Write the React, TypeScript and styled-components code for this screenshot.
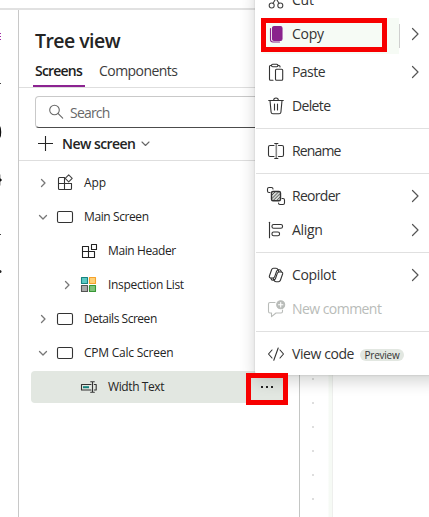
import React from 'react';
import styled, { createGlobalStyle, css } from 'styled-components';

const GlobalStyle = createGlobalStyle`
  * { box-sizing: border-box; }
  body { margin: 0; background: #fff; overflow: hidden; }
`;

const Page = styled.div`
  position: relative;
  width: 429px;
  height: 517px;
  overflow: hidden;
  display: flex;
  flex-direction: column;
  background: #fff;
  color: #242424;
  font-family: 'Open Sans', 'Noto Sans', sans-serif;
`;

const TopBar = styled.header`
  flex: none;
  height: 10px;
  border-bottom: 2px solid #e1e1e1;
`;

const Body = styled.div`
  flex: 1;
  display: flex;
  min-height: 0;
`;

const Rail = styled.nav`
  width: 19px;
  flex: none;
  border-right: 1px solid #c8c8c8;
`;

const TreePanel = styled.section`
  width: 281px;
  flex: none;
  display: flex;
  flex-direction: column;
  border-right: 1px solid #c4c6c4;
`;

const Title = styled.h1`
  margin: 17px 0 0 16px;
  height: 28px;
  line-height: 28px;
  font-size: 19.5px;
  font-weight: 600;
  letter-spacing: -0.55px;
  white-space: nowrap;
`;

const Tabs = styled.div`
  display: flex;
  gap: 12px;
  height: 33px;
  padding-left: 14px;
  border-bottom: 1px solid #dedede;
`;

const Tab = styled.button<{ $active?: boolean; $spacing: number }>`
  height: 32px;
  padding: 0 2px;
  border: 0;
  background: none;
  font: ${p => (p.$active ? 600 : 400)} 14px/32px 'Open Sans', sans-serif;
  letter-spacing: ${p => p.$spacing}px;
  color: ${p => (p.$active ? '#1c1c1c' : '#3b3b3b')};
  text-align: left;
  white-space: nowrap;
  ${p => p.$active && css`
    width: 52px;
    border-bottom: 2px solid #8c2391;
  `}
`;

const Search = styled.div`
  display: flex;
  align-items: center;
  gap: 3px;
  height: 32px;
  margin: 8px 12px 0 16px;
  padding-left: 11px;
  border: 1px solid #c9c9c9;
  border-bottom-color: #4c4c4c;
  border-radius: 4px;
  color: #686868;
  font-size: 14px;
  letter-spacing: -0.8px;
`;

const NewScreen = styled.button`
  display: flex;
  align-items: center;
  height: 33px;
  padding: 0 0 2px 16px;
  border: 0;
  border-bottom: 1px solid #dedede;
  background: none;
  color: #242424;
  font: 600 14px 'Open Sans', sans-serif;
  letter-spacing: -0.55px;
`;

const NewScreenText = styled.span`
  width: 79px;
  margin-left: 7px;
  text-align: left;
  white-space: nowrap;
`;

const TreeList = styled.div`
  display: flex;
  flex-direction: column;
  gap: 2px;
  padding: 6px 11px 0 12px;
`;

const TreeRow = styled.div<{ $level: number; $selected?: boolean }>`
  display: flex;
  align-items: center;
  gap: 2px;
  height: 32px;
  padding-left: ${p => 2 + p.$level * 24}px;
  border-radius: 4px;
  background: ${p => (p.$selected ? '#e2e7e1' : 'transparent')};
`;

const Slot = styled.span`
  display: flex;
  align-items: center;
  justify-content: center;
  width: 20px;
  height: 20px;
  flex: none;
`;

const TreeLabel = styled.span<{ $spacing: number }>`
  margin-left: 7px;
  font-size: 12px;
  line-height: 16px;
  letter-spacing: ${p => p.$spacing}px;
  white-space: nowrap;
`;

const Canvas = styled.main`
  flex: 1;
  display: flex;
`;

const Gutter = styled.div`
  width: 33px;
  display: flex;
  flex-direction: column;
  align-items: flex-start;
  gap: 22px;
  padding: 368px 0 0 12px;
  background: linear-gradient(90deg, transparent 28px, #f6faf5 29px 32px, #eeefed 32px);
`;

const GridDot = styled.i`
  width: 2px;
  height: 2px;
  flex: none;
  background: #dedede;
`;

const Menu = styled.div`
  position: absolute;
  left: 255px;
  top: -17px;
  width: 190px;
  height: 392px;
  display: flex;
  flex-direction: column;
  padding: 0 16px 4px 6px;
  background: #fff;
  border-radius: 4px;
  box-shadow: 0 0 2px rgba(0, 0, 0, 0.18), 0 6px 16px rgba(0, 10, 0, 0.18);
`;

const MenuRow = styled.div<{ $disabled?: boolean; $hovered?: boolean }>`
  display: flex;
  align-items: center;
  height: 34px;
  flex: none;
  padding-left: 5px;
  color: ${p => (p.$disabled ? '#b9bcb9' : '#333')};
  ${p => p.$hovered && css`
    height: 36px;
    margin: 1px 0;
    padding-bottom: 4px;
    border-radius: 4px;
    background: linear-gradient(90deg, #f6fbf5 138px, #fff 138px);
  `}
`;

const MenuLabel = styled.span<{ $spacing: number; $wide?: boolean }>`
  width: ${p => (p.$wide ? 'auto' : '113px')};
  margin-left: 6px;
  font-size: 14px;
  line-height: 20px;
  letter-spacing: ${p => p.$spacing}px;
  white-space: nowrap;
`;

const SplitLine = styled.i`
  width: 1px;
  height: 24px;
  margin: 3px 5px 0 -6px;
  background: #cfcfcf;
`;

const Separator = styled.hr`
  flex: none;
  width: 190px;
  height: 1px;
  margin: 5px 0 5px -5px;
  border: 0;
  background: #e0e0e0;
`;

const Badge = styled.span`
  display: flex;
  align-items: center;
  justify-content: center;
  width: 44px;
  height: 12px;
  margin: 2px 0 0 6px;
  border-radius: 6px;
  background: #e2e7e1;
  font-size: 10px;
  line-height: 12px;
  letter-spacing: -0.25px;
`;

const Highlight = styled.div<{ $x: number; $y: number; $w: number; $h: number }>`
  position: absolute;
  left: ${p => p.$x}px;
  top: ${p => p.$y}px;
  width: ${p => p.$w}px;
  height: ${p => p.$h}px;
  border: 5px solid #f70000;
`;

const MoreDots = styled.div`
  position: absolute;
  left: 261px;
  top: 386px;
  display: flex;
  gap: 3px;
`;

const MoreDot = styled.i`
  width: 2px;
  height: 2px;
  background: #222;
`;

const Icon = styled.svg.attrs({ height: 20 })`
  flex: none;
  overflow: visible;
  fill: none;
  stroke: currentColor;
  stroke-width: 1.1;
  stroke-linecap: round;
  stroke-linejoin: round;
`;

const Glyph20 = ({ color, children }: { color?: string; children: React.ReactNode }) => (
  <Icon width={20} viewBox="0 0 20 20" color={color}>{children}</Icon>
);

const Chevron = ({ down }: { down?: boolean }) => (
  <Glyph20 color="#777">
    <path strokeWidth="1.3" d={down ? 'M6.5 8.5 10 12l3.5-3.5' : 'M8.5 6.5 12 10l-3.5 3.5'} />
  </Glyph20>
);

const MenuChevron = () => (
  <Glyph20 color="#555"><path strokeWidth="1.2" d="m7.5 4.500 5.5 5.500-5.5 5.500" /></Glyph20>
);

const CutIcon = () => (
  <Glyph20 color="#444"><circle cx="5.7" cy="15.5" r="2.5" /><circle cx="14.3" cy="15.5" r="2.5" /><path d="M7 13.3 14 2M13 13.3 6 2" /></Glyph20>
);
const CopyIcon = () => (
  <Glyph20 color="#8a238c"><rect x="6.5" y="2.5" width="9.5" height="14" rx="1.6" fill="#8a238c" /><path d="M4.5 4.5v11q0 2.5 2.5 2.5h6.5" /></Glyph20>
);
const PasteIcon = () => (
  <Glyph20><path d="M5.5 3.5H4.3Q3.5 3.5 3.5 4.5v12.7q0 1 1 1H7M12 3.5h1q1 0 1 1v.5" /><rect x="5.5" y="2.3" width="6.5" height="2.4" rx="1.2" /><rect x="9.5" y="7.3" width="7.2" height="10.9" rx="1" /></Glyph20>
);
const DeleteIcon = () => (
  <Glyph20><path d="M2.7 4.5h14.6M7.7 4.2c0-3 4.6-3 4.6 0M4 4.5l1.1 11.7q.2 1.6 1.8 1.6h6.2q1.6 0 1.8-1.6L16 4.5M8.5 8v6M11.5 8v6" /></Glyph20>
);
const RenameIcon = () => (
  <Glyph20><path d="M8 4.5H4Q2.5 4.5 2.5 6v8Q2.5 15.5 4 15.5h4M12.5 4.5H16Q17.5 4.5 17.5 6v8q0 1.5-1.5 1.5h-3.5" /><path strokeWidth="1.6" stroke="#888" d="M10.3 3v14" /><path d="M8.7 2.5h3.2M8.7 17.5h3.2" /></Glyph20>
);
const ReorderIcon = () => (
  <Glyph20>
    <path d="M4 6.5H3Q1.5 6.5 1.5 5V3Q1.5 1.5 3 1.5h2.5Q7 1.5 7 3M16 12.5h1q1.5 0 1.5 1.5v3q0 1.5-1.5 1.5h-3q-1.5 0-1.5-1.5" />
    <rect x="5.5" y="5.5" width="9" height="9.2" rx="1.5" fill="#d5d9d5" strokeWidth="1.4" />
    <path strokeWidth=".8" d="m6 9 3-3M6 12.5 12.5 6M7.5 14.2 14 7.7M11 14.2l3-3" />
  </Glyph20>
);
const AlignIcon = () => (
  <Glyph20><path d="M3.5 2.2v15.6" /><rect x="6" y="4.5" width="10.5" height="3.8" rx="1.6" /><rect x="6" y="12" width="7.5" height="3.8" rx="1.6" /></Glyph20>
);
const CopilotIcon = () => (
  <Glyph20>
    <path d="M12.8 6.8 12 4.7q-.5-1.4-2-1.4H7.5q-1.4 0-1.9 1.4L3.4 11q-.5 2 1.5 2h2q1.3 0 1.8-1.4l1.9-5.3q.4-1.5 1.9-1.5h.9q1.200 0 1.600 1.200l.3.9" />
    <path d="m7.2 13.2.8 2.1q.5 1.4 2 1.4h2.5q1.4 0 1.9-1.4l2.2-6.3q.5-2-1.5-2h-2q-1.3 0-1.8 1.4l-1.9 5.3q-.4 1.5-1.9 1.5h-.7q-1.200 0-1.600-1.200l-.3-.9" />
  </Glyph20>
);
const CommentIcon = () => (
  <Glyph20 color="#b9bcb9"><path d="M9 3.5H4Q2.5 3.5 2.5 5v7.2q0 1.8 1.5 1.8h1.5v3.7L10 14h5q1.5 0 1.5-1.5V11" /><circle cx="14.7" cy="5.7" r="4" fill="#b9bcb9" /><path stroke="#fff" d="M12.5 5.7h4.4M14.7 3.5v4.4" /></Glyph20>
);
const CodeIcon = () => (
  <Glyph20><path d="M6 6 2.5 10 6 14M14 6l3.5 4-3.5 4M12.2 4 7.8 16.3" /></Glyph20>
);

const AppIcon = () => (
  <Glyph20 color="#333"><path d="M9.5 4.5h-5q-1 0-1 1v10q0 1 1 1h11q1 0 1-1V10.500M3.5 10.5h13M9.5 4.5v12" /><path fill="#fff" stroke="#444" d="m13.7 1.8 3.5 3.5-3.5 3.6-3.5-3.6z" /></Glyph20>
);
const ScreenIcon = () => (
  <Glyph20 color="#333"><rect x="2.5" y="4.5" width="15" height="11" rx="1.5" /></Glyph20>
);
const HeaderIcon = () => (
  <Glyph20 color="#222"><path d="M9.5 10.5v-5h-6v11h12v-6zM3.5 10.5h6v6M12.5 3.5h5v5h-5z" /></Glyph20>
);
const GalleryIcon = () => (
  <Glyph20>
    <rect x="2.5" y="2.5" width="6" height="6" fill="#5bcac4" stroke="#17837f" />
    <rect x="10.5" y="2.5" width="6" height="6" fill="#ffd178" stroke="#f5a22c" />
    <rect x="2.5" y="10.5" width="6" height="6" fill="#aaa" stroke="#555" />
    <rect x="10.5" y="10.5" width="6" height="6" fill="#7ec37a" stroke="#379735" />
  </Glyph20>
);
const InputIcon = () => (
  <Glyph20 color="#333"><path d="M12 7.500H2.5v5.500H12M15.3 7.500h1.9v5.500h-1.9M13.500 5.2v9.6M11.7 4.7h3.6M11.7 15.3h3.6" /><path stroke="#13827c" strokeWidth="2" strokeLinecap="butt" d="M4 10.200h6" /></Glyph20>
);

type TreeItem = { label: string; level: number; icon: React.FC; state?: 'open' | 'closed'; spacing: number; selected?: boolean };

const treeItems: TreeItem[] = [
  { label: 'App', level: 0, icon: AppIcon, state: 'closed', spacing: -0.1 },
  { label: 'Main Screen', level: 0, icon: ScreenIcon, state: 'open', spacing: -0.4 },
  { label: 'Main Header', level: 1, icon: HeaderIcon, spacing: -0.4 },
  { label: 'Inspection List', level: 1, icon: GalleryIcon, state: 'closed', spacing: -0.32 },
  { label: 'Details Screen', level: 0, icon: ScreenIcon, state: 'closed', spacing: -0.47 },
  { label: 'CPM Calc Screen', level: 0, icon: ScreenIcon, state: 'open', spacing: -0.23 },
  { label: 'Width Text', level: 1, icon: InputIcon, spacing: -0.4, selected: true },
];

type MenuEntry = { label: string; icon: React.FC; spacing: number; submenu?: boolean; disabled?: boolean; hovered?: boolean; badge?: string };

const menuGroups: MenuEntry[][] = [
  [
    { label: 'Cut', icon: CutIcon, spacing: -0.2 },
    { label: 'Copy', icon: CopyIcon, spacing: -0.3, submenu: true, hovered: true },
    { label: 'Paste', icon: PasteIcon, spacing: -0.55, submenu: true },
    { label: 'Delete', icon: DeleteIcon, spacing: -0.65 },
  ],
  [{ label: 'Rename', icon: RenameIcon, spacing: -0.85 }],
  [
    { label: 'Reorder', icon: ReorderIcon, spacing: -0.7, submenu: true },
    { label: 'Align', icon: AlignIcon, spacing: -0.3, submenu: true },
  ],
  [
    { label: 'Copilot', icon: CopilotIcon, spacing: -0.35, submenu: true },
    { label: 'New comment', icon: CommentIcon, spacing: -0.55, disabled: true },
  ],
  [{ label: 'View code', icon: CodeIcon, spacing: -0.42, badge: 'Preview' }],
];

export default function App() {
  return (
    <Page>
      <GlobalStyle />
      <TopBar />
      <Body>
        <Rail>
          <svg width="18" height="300" viewBox="0 10 18 300" fill="none">
            <path stroke="#a32ba8" d="M0 33.5h1M0 36.5h1M0 39.5h1" />
            <path stroke="#444" d="M0 83.5h1M0 234.5h1" />
            <path stroke="#111" strokeWidth="1.5" d="M-1 126Q.5 127 .5 132T-1 138M-.5 174.500v4l1.500 1.500-1.500 1.500v4" />
            <circle cx="0" cy="271.5" r="1.5" fill="#222" />
          </svg>
        </Rail>
        <TreePanel>
          <Title>Tree view</Title>
          <Tabs>
            <Tab $active $spacing={-0.8}>Screens</Tab>
            <Tab $spacing={-0.55}>Components</Tab>
          </Tabs>
          <Search>
            <Glyph20><circle cx="7.5" cy="8" r="4.8" /><path d="m11.2 11.7 4.500 4.500" /></Glyph20>
            Search
          </Search>
          <NewScreen>
            <Glyph20><path strokeLinecap="butt" d="M3 10.5h15M10.5 3v15" /></Glyph20>
            <NewScreenText>New screen</NewScreenText>
            <Icon width={10} viewBox="0 0 10 20" color="#666"><path d="m1 9 3.500 3.500L8 9" /></Icon>
          </NewScreen>
          <TreeList>
            {treeItems.map(({ icon: Glyph, ...item }) => (
              <TreeRow key={item.label} $level={item.level} $selected={item.selected}>
                <Slot>{item.state && <Chevron down={item.state === 'open'} />}</Slot>
                <Slot><Glyph /></Slot>
                <TreeLabel $spacing={item.spacing}>{item.label}</TreeLabel>
              </TreeRow>
            ))}
          </TreeList>
        </TreePanel>
        <Canvas>
          <Gutter>{[0, 1, 2, 3, 4, 5].map(n => <GridDot key={n} />)}</Gutter>
        </Canvas>
      </Body>
      <Menu>
        {menuGroups.map((group, index) => (
          <React.Fragment key={group[0].label}>
            {index > 0 && <Separator />}
            {group.map(({ icon: Glyph, ...entry }) => (
              <MenuRow key={entry.label} $disabled={entry.disabled} $hovered={entry.hovered}>
                <Glyph />
                <MenuLabel $spacing={entry.spacing} $wide={!!entry.badge}>{entry.label}</MenuLabel>
                {entry.badge && <Badge>{entry.badge}</Badge>}
                {entry.hovered && <SplitLine />}
                {entry.submenu && <MenuChevron />}
              </MenuRow>
            ))}
          </React.Fragment>
        ))}
      </Menu>
      <MoreDots><MoreDot /><MoreDot /><MoreDot /></MoreDots>
      <Highlight $x={261} $y={18} $w={126} $h={34} />
      <Highlight $x={246} $y={373} $w={42} $h={32} />
    </Page>
  );
}
